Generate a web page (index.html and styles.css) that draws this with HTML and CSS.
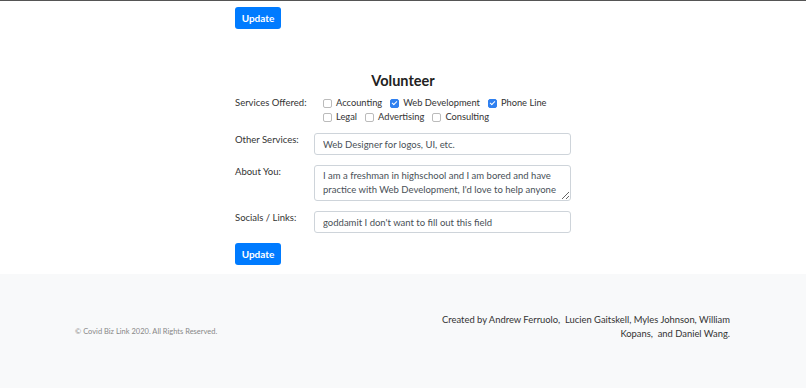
FILE: index.html
```html
<!DOCTYPE html>
<html lang="en">
<head>
  <meta charset="UTF-8" />
  <title>Volunteer</title>
  <link rel="stylesheet" href="styles.css">
</head>
<body>
  <div class="top-line"></div>

  <div class="container">
    <button class="btn">Update</button>

    <h2 class="section-title">Volunteer</h2>

    <!-- Services -->
    <div class="form-row services-row">
      <div class="form-label">Services Offered:</div>
      <div class="checks">
        <label class="check"><span class="box"></span>Accounting</label>
        <label class="check"><span class="box checked"></span>Web Development</label>
        <label class="check"><span class="box checked"></span>Phone Line</label>
        <label class="check"><span class="box"></span>Legal</label>
        <label class="check"><span class="box"></span>Advertising</label>
        <label class="check"><span class="box"></span>Consulting</label>
      </div>
    </div>

    <div class="form-row">
      <div class="form-label">Other Services:</div>
      <input class="field" type="text" value="Web Designer for logos, UI, etc." />
    </div>

    <div class="form-row">
      <div class="form-label">About You:</div>
      <textarea class="field area">I am a freshman in highschool and I am bored and have practice with Web Development, I'd love to help anyone</textarea>
    </div>

    <div class="form-row">
      <div class="form-label">Socials / Links:</div>
      <input class="field" type="text" value="goddamit I don't want to fill out this field" />
    </div>

    <button class="btn">Update</button>
  </div>

  <footer class="footer">
    <p class="copyright">© Covid Biz Link 2020. All Rights Reserved.</p>
    <p class="credits">Created by Andrew Ferruolo,&nbsp; Lucien Gaitskell, Myles Johnson, William Kopans,&nbsp; and Daniel Wang.</p>
  </footer>
</body>
</html>
```

FILE: styles.css
```css
body {
  font-family: Lato, "Open Sans", sans-serif;
  margin: 0;
  padding: 0;
  color: #333;
  background: #fff;
}

.top-line {
  height: 1px;
  background-color: #555;
}

.container {
  width: 336px;
  margin: 0 auto;
  padding-bottom: 9px;
}

.btn {
  display: block;
  width: 46px;
  height: 22px;
  margin-top: 6px;
  padding: 0;
  border: none;
  border-radius: 3px;
  background-color: #007bff;
  color: #fff;
  font-family: inherit;
  font-size: 10px;
  font-weight: 700;
}

.section-title {
  margin: 43px 0 6px;
  font-size: 14.5px;
  line-height: 18px;
  text-align: center;
  color: #222;
}

.form-row {
  display: flex;
  align-items: flex-start;
  margin-bottom: 10px;
  font-size: 9.5px;
  line-height: 14px;
}

.form-row .btn {
  margin-top: 0;
}

.form-label {
  width: 79px;
  flex-shrink: 0;
}

.services-row {
  margin-bottom: 9px;
}

.checks {
  display: flex;
  flex-wrap: wrap;
  width: 248px;
  padding-left: 9px;
  column-gap: 8px;
  font-size: 9.3px;
}

.check {
  display: flex;
  align-items: center;
  gap: 4px;
}

.box {
  width: 7px;
  height: 7px;
  border: 1px solid #bbb;
  border-radius: 2px;
  background: #fff;
  position: relative;
}

.box.checked {
  border-color: #2f80f0;
  background-color: #2f80f0;
}

.box.checked::after {
  content: "";
  position: absolute;
  left: 2px;
  top: 0;
  width: 2px;
  height: 4px;
  border: solid #fff;
  border-width: 0 1.5px 1.5px 0;
  transform: rotate(45deg);
}

.field {
  box-sizing: border-box;
  width: 257px;
  height: 22px;
  padding: 0 8px;
  border: 1px solid #ced4da;
  border-radius: 3px;
  font-family: inherit;
  font-size: 9.5px;
  color: #495057;
  background: #fff;
  margin: 0;
}

.area {
  height: 36px;
  padding: 3px 8px;
  line-height: 14px;
  overflow: hidden;
}

.footer {
  display: flex;
  justify-content: space-between;
  align-items: center;
  height: 114px;
  padding: 0 76px 0 75px;
  background-color: #f8f9fa;
}

.copyright {
  margin: 0;
  font-size: 7.5px;
  color: #888;
}

.credits {
  margin: 0 0 8px;
  width: 292px;
  font-size: 9.4px;
  line-height: 14px;
  text-align: right;
  color: #333;
}
```
